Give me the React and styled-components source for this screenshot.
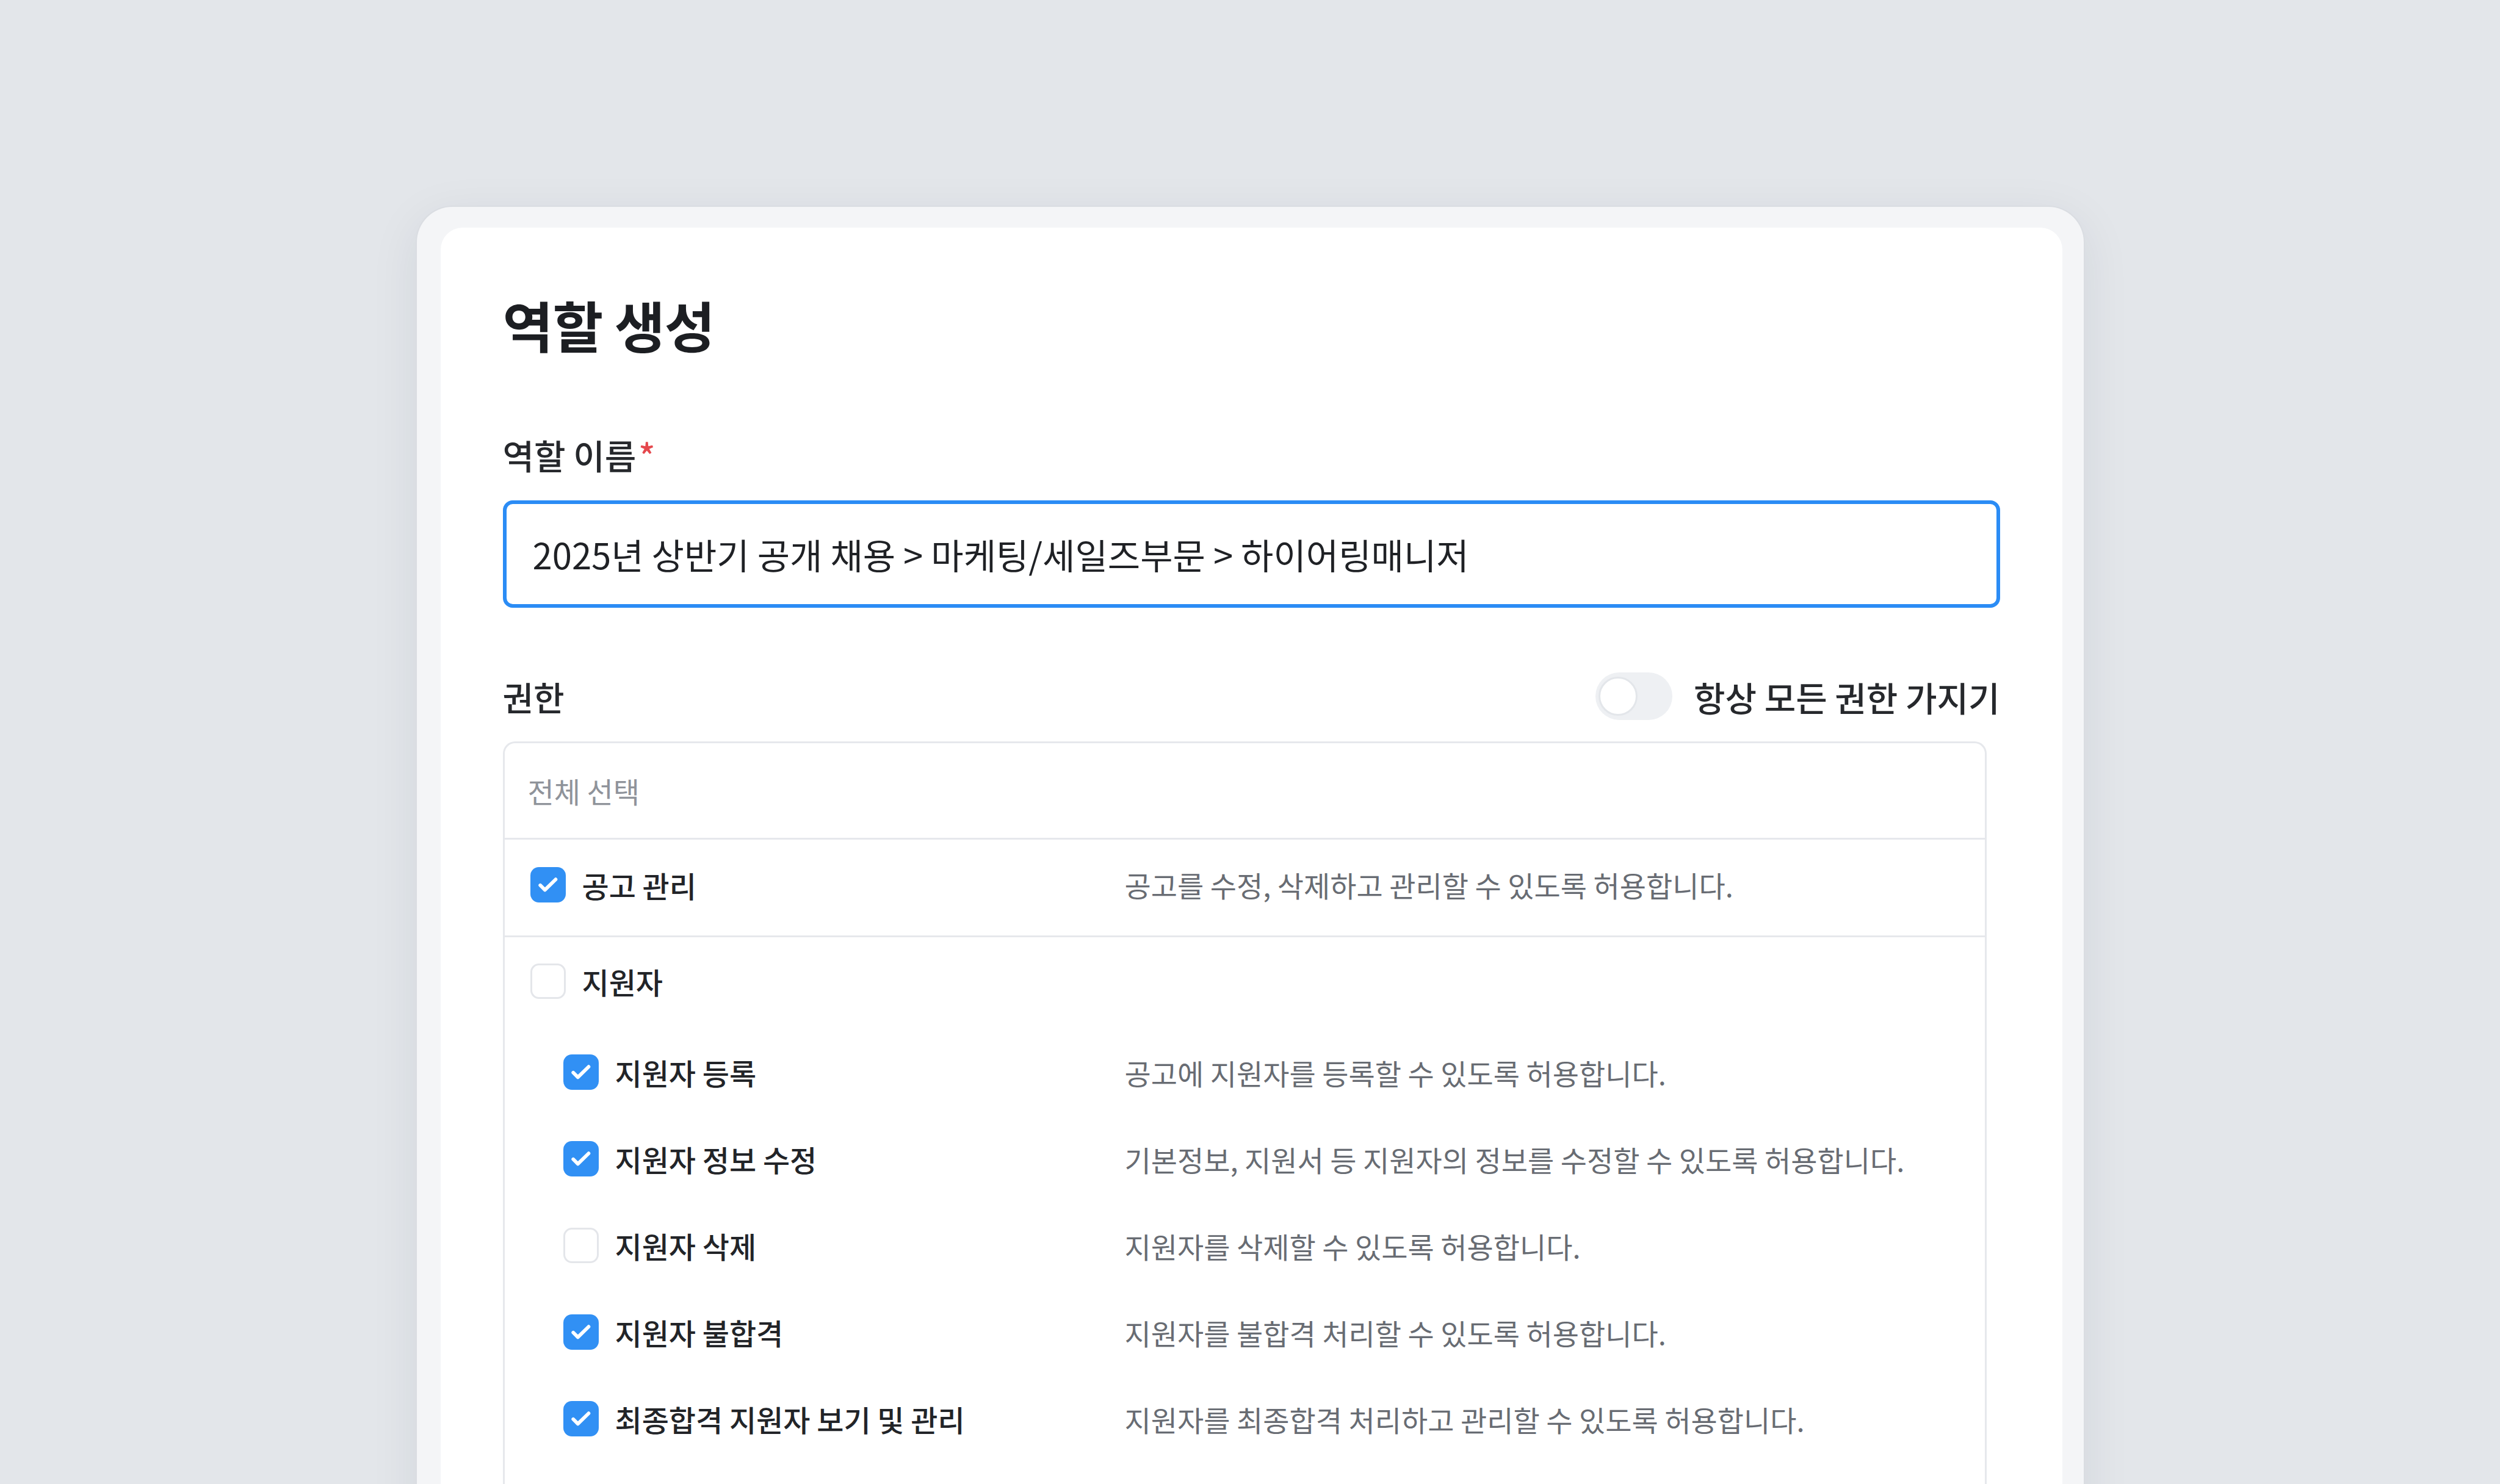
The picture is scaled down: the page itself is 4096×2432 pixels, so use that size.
import React from "react";
import styled, { createGlobalStyle } from "styled-components";

const GlobalStyle = createGlobalStyle`
  html, body {
    margin: 0;
    padding: 0;
    width: 4096px;
    height: 2432px;
    overflow: hidden;
    background: #e3e6ea;
  }
  * {
    box-sizing: border-box;
  }
`;

const FONT = `"Noto Sans CJK KR", "Noto Sans", sans-serif`;

const permissions = [
  {
    label: "공고 관리",
    desc: "공고를 수정, 삭제하고 관리할 수 있도록 허용합니다.",
    checked: true,
  },
];

const applicantChildren = [
  {
    label: "지원자 등록",
    desc: "공고에 지원자를 등록할 수 있도록 허용합니다.",
    checked: true,
  },
  {
    label: "지원자 정보 수정",
    desc: "기본정보, 지원서 등 지원자의 정보를 수정할 수 있도록 허용합니다.",
    checked: true,
  },
  {
    label: "지원자 삭제",
    desc: "지원자를 삭제할 수 있도록 허용합니다.",
    checked: false,
  },
  {
    label: "지원자 불합격",
    desc: "지원자를 불합격 처리할 수 있도록 허용합니다.",
    checked: true,
  },
  {
    label: "최종합격 지원자 보기 및 관리",
    desc: "지원자를 최종합격 처리하고 관리할 수 있도록 허용합니다.",
    checked: true,
  },
];

const Checkbox = ({ checked }) => (
  <Box $checked={checked}>
    {checked && (
      <svg width="48" height="48" viewBox="0 0 24 24" fill="none">
        <path
          d="M5.6 12.4 L9.4 16.2 L18.2 7.6"
          stroke="#ffffff"
          strokeWidth="2.9"
          strokeLinecap="round"
          strokeLinejoin="round"
        />
      </svg>
    )}
  </Box>
);

const PermRow = ({ item, indent = 0, height, divider, lift }) => (
  <Row $indent={indent} $height={height} $divider={divider} $lift={lift}>
    <LabelCell $indent={indent}>
      <Checkbox checked={item.checked} />
      <RowLabel>{item.label}</RowLabel>
    </LabelCell>
    {item.desc && <RowDesc>{item.desc}</RowDesc>}
  </Row>
);

const App = () => {
  return (
    <>
      <GlobalStyle />
      <Page>
        <Frame>
          <Card>
            <Title>역할 생성</Title>
            <FieldLabel>
              역할 이름<Required>*</Required>
            </FieldLabel>
            <NameInput
              readOnly
              value="2025년 상반기 공개 채용 > 마케팅/세일즈부문 > 하이어링매니저"
            />

            <SectionHeader>
              <SectionTitle>권한</SectionTitle>
              <ToggleWrap>
                <Switch>
                  <Knob />
                </Switch>
                <ToggleText>항상 모든 권한 가지기</ToggleText>
              </ToggleWrap>
            </SectionHeader>

            <PermTable>
              <TableHead>전체 선택</TableHead>
              {permissions.map((p) => (
                <PermRow key={p.label} item={p} height={160} divider lift />
              ))}
              <Group>
                <PermRow item={{ label: "지원자", checked: false }} height={144} />
                <Children>
                  {applicantChildren.map((c) => (
                    <PermRow key={c.label} item={c} indent={54} height={142} />
                  ))}
                </Children>
              </Group>
            </PermTable>
          </Card>
        </Frame>
      </Page>
    </>
  );
};

const Page = styled.div`
  width: 4096px;
  height: 2432px;
  padding-top: 337px;
  display: flex;
  justify-content: center;
  overflow: hidden;
  font-family: ${FONT};
`;

const Frame = styled.div`
  width: 2735px;
  min-height: 2400px;
  padding: 34px 35px 0 39px;
  background: #f4f5f7;
  border: 2px solid #dadde2;
  border-bottom: none;
  border-radius: 60px 60px 0 0;
  box-shadow: 0 20px 80px rgba(30, 40, 60, 0.08);
`;

const Card = styled.div`
  background: #ffffff;
  border-radius: 36px 36px 0 0;
  padding: 114px 102px 0;
  min-height: 2300px;
`;

const Title = styled.h1`
  margin: 0;
  font-family: ${FONT};
  font-size: 90px;
  line-height: 88px;
  font-weight: 700;
  letter-spacing: -0.01em;
  color: #1c1e22;
`;

const FieldLabel = styled.div`
  margin-top: 144px;
  font-size: 56px;
  line-height: 52px;
  font-weight: 500;
  color: #26282c;
`;

const Required = styled.span`
  color: #e5484d;
  margin-left: 4px;
`;

const NameInput = styled.input`
  display: block;
  width: 100%;
  height: 176px;
  margin-top: 49px;
  padding: 0 43px;
  border: 6px solid #2b8cf5;
  border-radius: 16px;
  outline: none;
  background: #ffffff;
  font-family: ${FONT};
  font-size: 58px;
  font-weight: 400;
  letter-spacing: 0;
  color: #1f2125;
`;

const SectionHeader = styled.div`
  margin-top: 106px;
  height: 78px;
  display: flex;
  align-items: center;
  justify-content: space-between;
`;

const SectionTitle = styled.div`
  font-size: 55px;
  font-weight: 500;
  color: #26282c;
`;

const ToggleWrap = styled.div`
  display: flex;
  align-items: center;
  gap: 35px;
`;

const Switch = styled.div`
  width: 126px;
  height: 78px;
  border-radius: 39px;
  background: #eef0f3;
  padding: 7px 5px;
  display: flex;
  align-items: center;
`;

const Knob = styled.div`
  width: 64px;
  height: 64px;
  border-radius: 50%;
  background: #ffffff;
  border: 3px solid #e3e6ea;
`;

const ToggleText = styled.div`
  font-size: 56px;
  font-weight: 500;
  color: #26282c;
`;

const PermTable = styled.div`
  margin-top: 35px;
  margin-right: 22px;
  border: 3px solid #e6e8ec;
  border-bottom: none;
  border-radius: 20px 20px 0 0;
  padding-bottom: 200px;
`;

const TableHead = styled.div`
  height: 158px;
  padding-left: 38px;
  display: flex;
  align-items: center;
  border-bottom: 3px solid #e6e8ec;
  font-size: 47px;
  font-weight: 400;
  color: #8f939a;
`;

const Row = styled.div`
  height: ${(p) => p.$height}px;
  padding-left: ${(p) => 42 + p.$indent}px;
  padding-bottom: ${(p) => (p.$lift ? 10 : 0)}px;
  display: flex;
  align-items: center;
  border-bottom: ${(p) => (p.$divider ? "3px solid #e6e8ec" : "none")};
`;

const LabelCell = styled.div`
  width: ${(p) => 974 - p.$indent}px;
  flex: 0 0 auto;
  display: flex;
  align-items: center;
  gap: 27px;
`;

const Box = styled.span`
  width: 58px;
  height: 58px;
  flex: 0 0 58px;
  border-radius: 14px;
  display: flex;
  align-items: center;
  justify-content: center;
  background: ${(p) => (p.$checked ? "#3190f4" : "#ffffff")};
  border: ${(p) => (p.$checked ? "none" : "3px solid #e4e6ea")};
`;

const RowLabel = styled.span`
  font-size: 48px;
  font-weight: 500;
  color: #222428;
`;

const RowDesc = styled.span`
  font-size: 47px;
  font-weight: 400;
  color: #686c73;
`;

const Group = styled.div`
  display: flex;
  flex-direction: column;
`;

const Children = styled.div`
  margin-top: 6px;
  display: flex;
  flex-direction: column;
`;

export default App;
